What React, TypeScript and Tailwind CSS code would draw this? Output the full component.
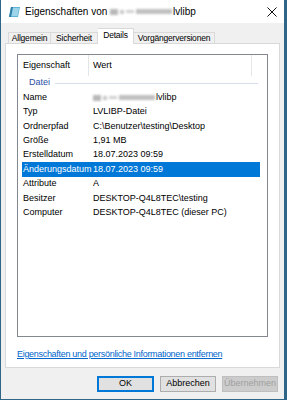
import React from "react";

const rows: { k: string; v: string; blur?: boolean; sel?: boolean }[] = [
  { k: "Name", v: "lvlibp", blur: true },
  { k: "Typ", v: "LVLIBP-Datei" },
  { k: "Ordnerpfad", v: "C:\\Benutzer\\testing\\Desktop" },
  { k: "Größe", v: "1,91 MB" },
  { k: "Erstelldatum", v: "18.07.2023 09:59" },
  { k: "Änderungsdatum", v: "18.07.2023 09:59", sel: true },
  { k: "Attribute", v: "A" },
  { k: "Besitzer", v: "DESKTOP-Q4L8TEC\\testing" },
  { k: "Computer", v: "DESKTOP-Q4L8TEC (dieser PC)" },
];

const Blur = ({ w }: { w: number }) => (
  <span className="inline-flex items-center gap-[2px] blur-[1px] mr-[1px]" style={{ width: w }}>
    <span className="h-[6px] w-[8px] bg-[#b8b8b8]" />
    <span className="h-[4px] w-[4px] bg-[#c8c8c8]" />
    <span className="h-[3px] w-[8px] bg-[#d0d0d0]" />
    <span className="h-[5px] flex-1 bg-[#c0c0c0]" />
  </span>
);

const FileIcon = () => (
  <svg width="13" height="12" viewBox="0 0 13 12">
    <polygon points="3,1 12,1 10,11 1,11" fill="#5fb3d6" />
    <polygon points="3,1 5,1 3,11 1,11" fill="#2f7fa8" />
    <polygon points="5,2 11,2 9.5,10 3.5,10" fill="#9ed4ea" />
  </svg>
);

export default function App() {
  return (
    <div className="w-[287px] h-[400px] flex flex-col bg-white border-l border-r-[3px] border-b border-[#2f6688] font-['Liberation_Sans',Arial,sans-serif] text-[9px] text-black overflow-hidden">
      {/* title bar */}
      <div className="h-[23px] flex items-center pl-[7px] pr-[7px] bg-white shrink-0">
        <FileIcon />
        <span className="ml-[4px] text-[10px] flex items-center">
          Eigenschaften von&nbsp;<Blur w={62} />lvlibp
        </span>
        <svg className="ml-auto" width="10" height="10" viewBox="0 0 10 10">
          <path d="M0.5 0.5 L9.5 9.5 M9.5 0.5 L0.5 9.5" stroke="#111" strokeWidth="1" />
        </svg>
      </div>

      {/* body */}
      <div className="flex-1 bg-[#f0f0f0] flex flex-col px-[4px] pt-[5px]">
        {/* tabs */}
        <div className="flex items-end h-[15px] pl-[3px] relative z-10 text-[8.5px] tracking-[-0.2px]">
          <div className="w-[43px] h-[11px] border border-b-0 border-[#d9d9d9] bg-[#f0f0f0] flex items-center justify-center">Allgemein</div>
          <div className="w-[47px] h-[11px] border border-b-0 border-l-0 border-[#d9d9d9] bg-[#f0f0f0] flex items-center justify-center">Sicherheit</div>
          <div className="w-[36px] h-[16px] -mb-[1px] border border-b-0 border-l-0 border-[#d9d9d9] bg-white flex items-center justify-center pb-[2px]">Details</div>
          <div className="w-[81px] h-[11px] border border-b-0 border-l-0 border-[#d9d9d9] bg-[#f0f0f0] flex items-center justify-center">Vorgängerversionen</div>
        </div>

        {/* panel */}
        <div className="h-[325px] bg-white border border-[#d9d9d9] flex flex-col px-[11px] pt-[10px]">
          <div className="h-[283px] border border-[#828790] flex flex-col">
            <div className="h-[21px] flex items-stretch shrink-0">
              <div className="w-[71px] pl-[5px] flex items-center border-r border-[#e5e5e5]">Eigenschaft</div>
              <div className="w-[163px] pl-[4px] flex items-center border-r border-[#e5e5e5]">Wert</div>
            </div>
            <div className="h-[14.4px] flex items-center pl-[11px] pr-[9px] shrink-0">
              <span className="text-[#2b4fa6]">Datei</span>
              <span className="flex-1 h-px bg-[#d5deec] ml-[5px]" />
            </div>
            {rows.map((r) => (
              <div
                key={r.k}
                className={`h-[14.4px] flex items-center mx-[4px] mr-[7px] shrink-0 ${r.sel ? "bg-[#0078d7] text-white" : ""}`}
              >
                <span className="w-[71px] pl-[1px]">{r.k}</span>
                <span className="flex items-center">
                  {r.blur && <Blur w={62} />}
                  {r.v}
                </span>
              </div>
            ))}
          </div>
          <div className="mt-[11px] text-[#0066cc] underline tracking-[-0.3px]">Eigenschaften und persönliche Informationen entfernen</div>
        </div>

        {/* buttons */}
        <div className="flex justify-end gap-[6px] mt-[8px] pr-[2px]">
          <button className="w-[57px] h-[16px] bg-[#e1e1e1] border border-[#0078d7] outline outline-1 -outline-offset-2 outline-[#0078d7] flex items-center justify-center">OK</button>
          <button className="w-[56px] h-[16px] bg-[#e1e1e1] border border-[#adadad] flex items-center justify-center">Abbrechen</button>
          <button className="w-[56px] h-[16px] bg-[#cccccc] border border-[#bfbfbf] text-[#a0a0a0] flex items-center justify-center">Übernehmen</button>
        </div>
      </div>
    </div>
  );
}
